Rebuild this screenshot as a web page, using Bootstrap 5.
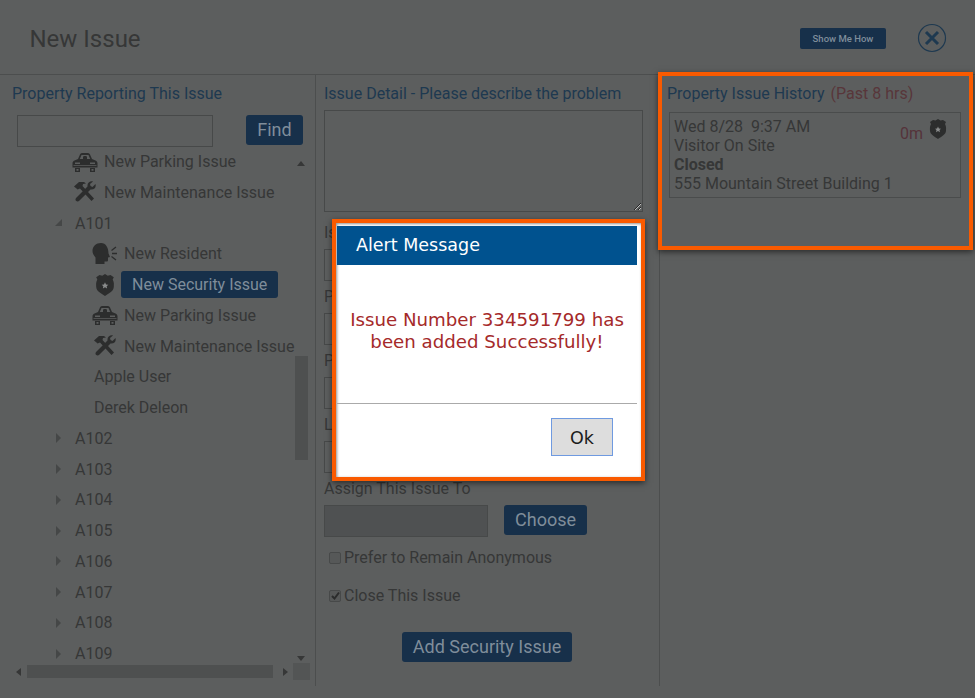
<!DOCTYPE html>
<html lang="en">
<head>
<meta charset="utf-8">
<title>New Issue</title>
<link href="https://cdn.jsdelivr.net/npm/bootstrap@5.3.0/dist/css/bootstrap.min.css" rel="stylesheet">
<style>
html,body{height:100%;}
body{background:#5c5e5e;color:#363737;font-family:Roboto,"Liberation Sans",sans-serif;font-size:16px;line-height:19px;overflow:hidden;position:relative;}
.top-bar{height:75px;border-bottom:1px solid #4c4e4e;padding:2px 28px 0 30px;}
.page-title{font-size:24px;color:#363737;font-weight:400;margin:2px auto 0 -0.5px;}
.how-btn{background:#17304a;color:#7f8d9a;font-size:9.5px;font-weight:500;border-radius:2px;width:86px;height:21px;margin-right:31px;display:flex;align-items:center;justify-content:center;}
.close-ico{width:30px;height:30px;display:block;}
.panes{height:611px;}
.pane-left{width:316px;border-right:1px solid #4c4e4e;padding-top:9px;position:relative;}
.pane-mid{width:344px;border-right:1px solid #4c4e4e;padding:9px 0 0 8px;}
.pane-right{flex:1;padding:9px 0 0 7px;}
.sec-label{color:#1e3950;line-height:19px;}
.pane-left .sec-label{padding-left:12px;}
.past{color:#58363a;margin-left:2px;}
.dim-input{background:transparent;border:1px solid #474949;height:32px;display:block;border-radius:0;outline:0;padding:0;}
.find-row{margin:12px 0 0 17px;height:32px;}
.find-row .dim-input{width:196px;margin-right:33px;}
.dim-btn{background:#17304a;color:#7f8d9a;font-size:18px;border-radius:3px;height:30px;display:flex;align-items:center;justify-content:center;padding-bottom:2px;}
.find-btn{width:57px;}
.tree-wrap{height:517px;overflow:hidden;margin-top:-0.8px;}
.tree-row{height:30.75px;display:flex;align-items:center;white-space:nowrap;}
.lvl-a{padding-left:72px;}
.lvl-b{padding-left:92px;}
.lvl-c{padding-left:94px;}
.lvl-u{padding-left:55px;}
.tree-ico{width:26px;height:22px;margin-right:6px;flex:none;color:#2c2d2d;}
.tree-arrow{width:20px;flex:none;display:block;}
.tree-pill{background:#17304a;color:#7f8d9a;border-radius:3px;height:27px;padding:0 11px;display:flex;align-items:center;margin-left:-3px;}
.bar-thumb{position:absolute;background:#4e5050;}
.bar-v{left:295px;top:281px;width:13px;height:104px;}
.bar-h{left:27px;top:590px;width:246px;height:13px;}
.bar-corner{position:absolute;left:293px;top:588px;width:17px;height:17px;background:#535555;}
.bar-arrow{position:absolute;width:0;height:0;border-style:solid;border-color:transparent;}
.ar-up{left:297px;top:86px;border-width:0 4px 5px;border-bottom-color:#363737;}
.ar-down{left:297px;top:581px;border-width:5px 4px 0;border-top-color:#363737;}
.ar-left{left:16px;top:593px;border-width:4px 5px 4px 0;border-right-color:#363737;}
.ar-right{left:283px;top:593px;border-width:4px 0 4px 5px;border-left-color:#363737;}
.detail-box{width:319px;height:102px;background:transparent;border:1px solid #474949;margin-top:7px;display:block;border-radius:0;outline:0;}
.first-field{margin-top:11px;}
.field-gap{margin-top:6px;}
.mid-input{width:164px;margin-top:7px;}
.assign-input{background:#4f5152;width:164px;margin-right:16px;}
.assign-row{margin-top:7px;}
.choose-btn{width:83px;}
.check-row{padding-left:5px;display:flex;align-items:center;gap:3px;height:19px;}
.anon-row{margin-top:11px;}
.close-row{margin-top:19px;}
.fake-check{width:12px;height:12px;border:1px solid #474949;border-radius:2px;flex:none;background:#565858;display:flex;align-items:center;justify-content:center;}
.add-btn{width:170px;margin:27px 0 0 78px;}
.hist-card{width:292px;height:86px;border:1px solid #4a4c4c;margin:9px 0 0 2px;padding:4px 4px;position:relative;}
.hist-age{position:absolute;left:230px;top:11px;color:#55333a;}
.hist-badge{position:absolute;left:259px;top:6px;width:18px;height:20px;color:#2c2d2d;}
.callout{position:absolute;border:4px solid #f95a00;box-shadow:0 2px 6px rgba(0,0,0,.55);}
.callout-hist{left:658px;top:72px;width:315px;height:178px;}
.alert-box{left:332px;top:219px;width:313px;height:262px;background:#fff;padding:3px 4px 0 1px;display:flex;flex-direction:column;box-shadow:0 2px 6px rgba(0,0,0,.55),inset 1px 1px 3px #8f8f8f;}
.alert-head{background:#00528f;color:#fff;height:39px;font-family:"DejaVu Sans",sans-serif;font-size:17.5px;font-weight:500;padding-left:19px;display:flex;align-items:center;flex:none;}
.alert-body{font-family:"DejaVu Sans",sans-serif;color:#a52a2a;font-size:18.2px;line-height:22px;text-align:center;height:139px;padding-top:44px;border-bottom:1px solid #aaa;flex:none;white-space:nowrap;}
.alert-foot{padding:14px 24px 0 0;}
.ok-btn{background:#ddd;border:1px solid #6f9ae0;color:#1c1c1c;font-family:"DejaVu Sans",sans-serif;font-size:17.5px;width:62px;height:38px;border-radius:0;padding:2px 0 0;}
</style>
</head>
<body>
<svg width="0" height="0" class="position-absolute">
  <defs>
    <symbol id="i-car" viewBox="0 0 26 20">
      <path fill="currentColor" d="M6 7 8 2.500C8.400 1.500 9.500 1 10.500 1H15.500C16.500 1 17.600 1.500 18 2.500L20 7 23.500 8.500C24.800 9.100 25.500 10 25.500 11.500V15.500H.5V11.500C.5 10 1.200 9.100 2.500 8.500Z"/>
      <path fill="#5c5e5e" d="M7.800 7 9.500 3H16.500L18.200 7ZM3 10.500H8V12H3ZM18 10.500H23V12H18ZM1.500 13.200H24.500V14H1.500Z"/>
      <path fill="currentColor" d="M11 5C11 3.800 15 3.800 15 5V7H11ZM3 16H8V20H3ZM18 16H23V20H18Z"/>
      <path fill="#5c5e5e" d="M4.500 17H6.500V18.800H4.500ZM19.500 17H21.500V18.800H19.500Z"/>
    </symbol>
    <symbol id="i-tools" viewBox="0 0 24 22">
      <path fill="currentColor" d="M1 5.500 6 1H11L13 2.500 10 3 9.500 5 21 17.500 18.500 20 7 7.500 4.500 8.500 3.500 7.500Z"/>
      <path fill="currentColor" d="M22.500 3 19.500 6 17.500 5 17 3 20 .5C17 -.2 14 2 14.500 5.500L3.500 16.500C2.500 17.500 2 18.500 3 19.800 4.300 21 5.500 20.500 6.500 19.500L17.500 8.500C21 9 23.500 6.500 22.500 3Z"/>
    </symbol>
    <symbol id="i-head" viewBox="0 0 26 22">
      <path fill="currentColor" d="M9 0C4 0 .5 3.500.5 8 .5 11 2.500 13 3.500 14.500V21H12.500V18.500H14.500C15.500 18.500 16 18 16 17V14.500L18 14 16.500 10.500C16.500 5 14 0 9 0Z"/>
      <path fill="none" stroke="currentColor" stroke-width="1.300" d="M24 4 19.500 7.500M20 10.500H25M19.500 13.500 24 17"/>
    </symbol>
    <symbol id="i-badge" viewBox="0 0 18 20">
      <path fill="currentColor" d="M9 0 11.500 1.500 14 1 17 3 16 5C17.500 8 17 9.500 17 11.500 17 15.500 12.500 17.500 9 20 5.500 17.500 1 15.500 1 11.500 1 9.500.5 8 2 5L1 3 4 1 6.500 1.500Z"/>
      <path fill="#8a8c8c" d="M9 7.500 9.900 9.500 12 9.700 10.500 11.100 10.900 13.200 9 12.100 7.100 13.200 7.500 11.100 6 9.700 8.100 9.500Z"/>
    </symbol>
  </defs>
</svg>

<header class="top-bar d-flex align-items-center">
  <h1 class="page-title">New Issue</h1>
  <div class="how-btn">Show Me How</div>
  <svg class="close-ico" viewBox="0 0 30 30"><circle cx="15" cy="15" r="13.500" fill="none" stroke="#1e3950" stroke-width="1.200"/><path d="M9 9 21 21M21 9 9 21" stroke="#1e3950" stroke-width="3"/></svg>
</header>

<main class="panes d-flex">
  <section class="pane-left">
    <div class="sec-label">Property Reporting This Issue</div>
    <div class="find-row d-flex">
      <input class="dim-input" type="text" aria-label="Find">
      <div class="dim-btn find-btn">Find</div>
    </div>
    <div class="tree-wrap">
      <div class="tree-row lvl-a"><svg class="tree-ico"><use href="#i-car"/></svg>New Parking Issue</div>
      <div class="tree-row lvl-a"><svg class="tree-ico"><use href="#i-tools"/></svg>New Maintenance Issue</div>
      <div class="tree-row lvl-u"><svg class="tree-arrow" height="10" viewBox="0 0 20 10"><path d="M7 1V8H0Z" fill="#454747"/></svg>A101</div>
      <div class="tree-row lvl-b"><svg class="tree-ico"><use href="#i-head"/></svg>New Resident</div>
      <div class="tree-row lvl-b"><svg class="tree-ico"><use href="#i-badge"/></svg><div class="tree-pill">New Security Issue</div></div>
      <div class="tree-row lvl-b"><svg class="tree-ico"><use href="#i-car"/></svg>New Parking Issue</div>
      <div class="tree-row lvl-b"><svg class="tree-ico"><use href="#i-tools"/></svg>New Maintenance Issue</div>
      <div class="tree-row lvl-c">Apple User</div>
      <div class="tree-row lvl-c">Derek Deleon</div>
      <div class="tree-row lvl-u"><svg class="tree-arrow" height="10" viewBox="0 0 20 10"><path d="M1 0 6 5 1 10Z" fill="#454747"/></svg>A102</div>
      <div class="tree-row lvl-u"><svg class="tree-arrow" height="10" viewBox="0 0 20 10"><path d="M1 0 6 5 1 10Z" fill="#454747"/></svg>A103</div>
      <div class="tree-row lvl-u"><svg class="tree-arrow" height="10" viewBox="0 0 20 10"><path d="M1 0 6 5 1 10Z" fill="#454747"/></svg>A104</div>
      <div class="tree-row lvl-u"><svg class="tree-arrow" height="10" viewBox="0 0 20 10"><path d="M1 0 6 5 1 10Z" fill="#454747"/></svg>A105</div>
      <div class="tree-row lvl-u"><svg class="tree-arrow" height="10" viewBox="0 0 20 10"><path d="M1 0 6 5 1 10Z" fill="#454747"/></svg>A106</div>
      <div class="tree-row lvl-u"><svg class="tree-arrow" height="10" viewBox="0 0 20 10"><path d="M1 0 6 5 1 10Z" fill="#454747"/></svg>A107</div>
      <div class="tree-row lvl-u"><svg class="tree-arrow" height="10" viewBox="0 0 20 10"><path d="M1 0 6 5 1 10Z" fill="#454747"/></svg>A108</div>
      <div class="tree-row lvl-u"><svg class="tree-arrow" height="10" viewBox="0 0 20 10"><path d="M1 0 6 5 1 10Z" fill="#454747"/></svg>A109</div>
    </div>
    <span class="bar-arrow ar-up"></span>
    <span class="bar-arrow ar-down"></span>
    <span class="bar-arrow ar-left"></span>
    <span class="bar-arrow ar-right"></span>
    <div class="bar-thumb bar-v"></div>
    <div class="bar-thumb bar-h"></div>
    <div class="bar-corner"></div>
  </section>

  <section class="pane-mid">
    <div class="sec-label">Issue Detail - Please describe the problem</div>
    <textarea class="detail-box" aria-label="Issue detail"></textarea>
    <div class="first-field">Issue Type</div>
    <input class="dim-input mid-input" type="text" aria-label="Issue Type">
    <div class="field-gap">Priority</div>
    <input class="dim-input mid-input" type="text" aria-label="Priority">
    <div class="field-gap">Person</div>
    <input class="dim-input mid-input" type="text" aria-label="Person">
    <div class="field-gap">Location</div>
    <input class="dim-input mid-input" type="text" aria-label="Location">
    <div class="field-gap">Assign This Issue To</div>
    <div class="assign-row d-flex">
      <input class="dim-input assign-input" type="text" aria-label="Assign This Issue To">
      <div class="dim-btn choose-btn">Choose</div>
    </div>
    <div class="check-row anon-row"><span class="fake-check"></span>Prefer to Remain Anonymous</div>
    <div class="check-row close-row"><span class="fake-check"><svg width="9" height="9" viewBox="0 0 9 9"><path d="M1 5 3.500 7.500 8 1.500" fill="none" stroke="#2b2c2c" stroke-width="2"/></svg></span>Close This Issue</div>
    <div class="dim-btn add-btn">Add Security Issue</div>
  </section>

  <section class="pane-right">
    <div class="sec-label">Property Issue History <span class="past">(Past 8 hrs)</span></div>
    <div class="hist-card">
      <div>Wed 8/28&nbsp; 9:37 AM</div>
      <div>Visitor On Site</div>
      <div class="fw-bold">Closed</div>
      <div>555 Mountain Street Building 1</div>
      <span class="hist-age">0m</span>
      <svg class="hist-badge"><use href="#i-badge"/></svg>
    </div>
  </section>
</main>

<div class="callout callout-hist"></div>

<div class="callout alert-box" role="alertdialog">
  <div class="alert-head">Alert Message</div>
  <div class="alert-body">Issue Number 334591799 has<br>been added Successfully!</div>
  <div class="alert-foot d-flex justify-content-end"><button type="button" class="btn ok-btn">Ok</button></div>
</div>
</body>
</html>
